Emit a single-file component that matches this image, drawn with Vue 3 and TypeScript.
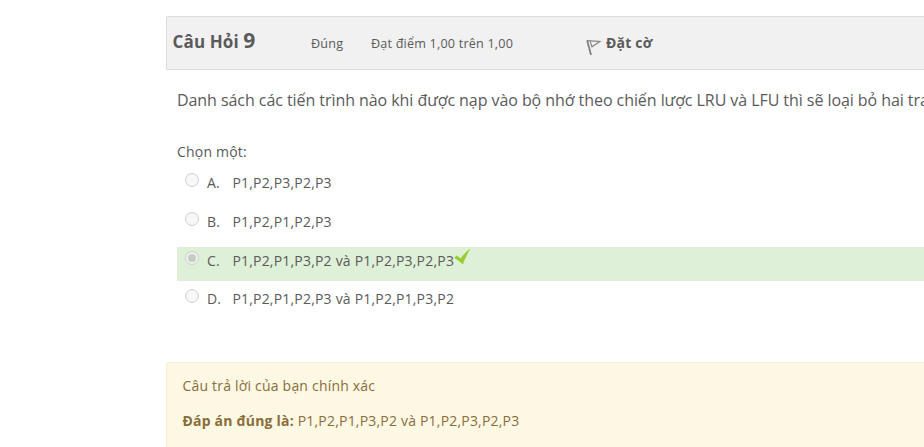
<script setup lang="ts">
interface Answer {
  letter: string
  text: string
  selected?: boolean
}

const answers: Answer[] = [
  { letter: 'A.', text: 'P1,P2,P3,P2,P3' },
  { letter: 'B.', text: 'P1,P2,P1,P2,P3' },
  { letter: 'C.', text: 'P1,P2,P1,P3,P2 và P1,P2,P3,P2,P3', selected: true },
  { letter: 'D.', text: 'P1,P2,P1,P2,P3 và P1,P2,P1,P3,P2' },
]
</script>

<template>
  <main class="question">
    <header class="info">
      <h3 class="number">Câu Hỏi <span class="qno">9</span></h3>
      <span class="state">Đúng</span>
      <span class="grade">Đạt điểm 1,00 trên 1,00</span>
      <a class="flag">
        <svg class="flag-icon" width="16" height="18" viewBox="0 0 16 18" fill="none" stroke="#808080">
          <path d="M1.2 1.5L5 16" stroke-width="1.8" />
          <path d="M1 1.6L14 2.4L6 7.8L4.2 2.6" stroke-width="1.1" />
        </svg>
        <span class="flag-text">Đặt cờ</span>
      </a>
    </header>
    <section class="content">
      <p class="qtext">Danh sách các tiến trình nào khi được nạp vào bộ nhớ theo chiến lược LRU và LFU thì sẽ loại bỏ hai trang</p>
      <p class="prompt">Chọn một:</p>
      <div class="answers">
        <div v-for="a in answers" :key="a.letter" class="row" :class="{ correct: a.selected }">
          <span class="radio" :class="{ on: a.selected }"></span>
          <span class="letter">{{ a.letter }}</span>
          <span class="text">{{ a.text }}</span>
          <svg v-if="a.selected" class="tick" width="17" height="17" viewBox="0 0 17 17">
            <path d="M0.2 9.8L2.8 7.6L6.6 10.4Q10.5 4.5 16.8 0.2Q12 7.5 8.8 16.6Q4.8 12.6 0.2 9.8Z" fill="#99cc33" />
          </svg>
        </div>
      </div>
    </section>
    <section class="feedback">
      <p class="result">Câu trả lời của bạn chính xác</p>
      <p class="right"><b>Đáp án đúng là:</b> P1,P2,P1,P3,P2 và P1,P2,P3,P2,P3</p>
    </section>
  </main>
</template>

<style>
body {
  background: #fff;
  overflow: hidden;
}
</style>

<style scoped>
.question {
  box-sizing: border-box;
  height: 447px;
  padding: 16px 0 0 166px;
  overflow: hidden;
  white-space: nowrap;
  font-family: "Open Sans", "Noto Sans", sans-serif;
  font-size: 14px;
  line-height: 20px;
  letter-spacing: 0.2px;
  color: #5a5a5a;
}
p, h3 {
  margin: 0;
}
.info {
  box-sizing: border-box;
  display: flex;
  height: 54px;
  padding: 0 0 0 5.6px;
  background: #f1f1f1;
  border: 1px solid #dcdcdc;
  border-right: 0;
  border-radius: 2px 0 0 2px;
}
.number {
  width: 138.4px;
  padding-top: 13px;
  font-size: 17px;
  line-height: 20px;
  letter-spacing: 0.1px;
}
.qno {
  font-size: 21px;
}
.state,
.grade {
  padding-top: 17px;
  font-size: 12.6px;
}
.state {
  width: 60px;
}
.grade {
  width: 215px;
}
.flag {
  display: flex;
}
.flag-icon {
  margin-top: 22px;
}
.flag-text {
  padding: 16px 0 0 4px;
  font-weight: 700;
}
.content {
  height: 292px;
  padding: 18px 0 0 11px;
  box-sizing: border-box;
}
.qtext {
  height: 54px;
  font-size: 16px;
  line-height: 24px;
  letter-spacing: -0.063px;
}
.prompt {
  height: 27.3px;
}
.answers {
  display: flex;
  flex-direction: column;
  gap: 4.67px;
}
.row {
  display: flex;
  box-sizing: border-box;
  height: 34px;
  padding: 4px 0 0 8px;
}
.correct {
  background: #dff0d8;
}
.radio {
  box-sizing: border-box;
  display: flex;
  align-items: center;
  justify-content: center;
  width: 14px;
  height: 14px;
  margin-right: 8px;
  background: #f7f7f7;
  border: 1px solid #cfcfcf;
  border-radius: 50%;
}
.radio.on {
  background: #eef2ec;
}
.radio.on::before {
  content: "";
  width: 8px;
  height: 8px;
  background: #c6ccc4;
  border-radius: 50%;
}
.letter {
  width: 25.4px;
}
.tick {
  margin-top: -3px;
}
.feedback {
  height: 120px;
  padding: 13px 0 0 15.5px;
  color: #8a6d3b;
  background: #fcf8e3;
  border: 1px solid #faebcc;
  border-right: 0;
  border-radius: 4px 0 0 0;
}
.right {
  margin-top: 15px;
}
</style>
